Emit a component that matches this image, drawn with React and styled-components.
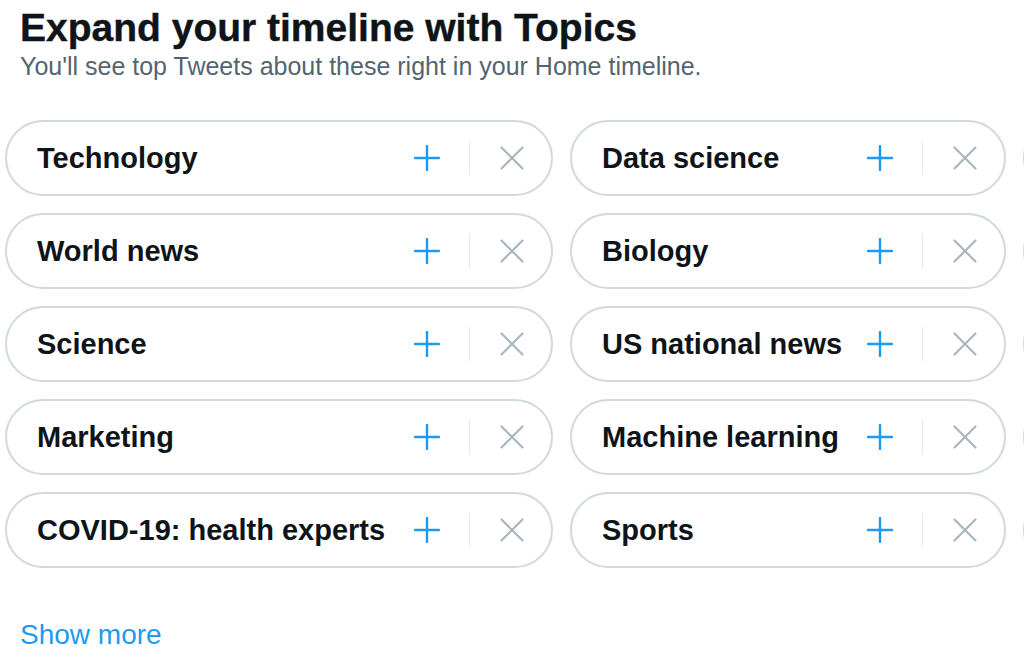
import React from "react";
import styled, { createGlobalStyle } from "styled-components";

const topics = [
  ["Technology", "Data science", "Psychology"],
  ["World news", "Biology", "Space"],
  ["Science", "US national news", "Business news"],
  ["Marketing", "Machine learning", "Gaming"],
  ["COVID-19: health experts", "Sports", "Entertainment"],
];

const columnWidths = ["548px", "436px", "436px"];

function PlusIcon() {
  return (
    <svg width="26" height="26" viewBox="0 0 26 26" fill="none">
      <path
        d="M13 1v24M1 13h24"
        stroke="#1d9bf0"
        strokeWidth="2.4"
        strokeLinecap="round"
      />
    </svg>
  );
}

function CloseIcon() {
  return (
    <svg width="24" height="24" viewBox="0 0 24 24" fill="none">
      <path
        d="M1.5 1.5l21 21M22.5 1.5l-21 21"
        stroke="#a9b6bf"
        strokeWidth="2.2"
        strokeLinecap="round"
      />
    </svg>
  );
}

function TopicPill({ name }) {
  return (
    <Pill>
      <PillLabel>{name}</PillLabel>
      <IconButton aria-label={`Follow ${name}`}>
        <PlusIcon />
      </IconButton>
      <Divider />
      <IconButton aria-label={`Dismiss ${name}`}>
        <CloseIcon />
      </IconButton>
    </Pill>
  );
}

export default function App() {
  const rows = topics.flat();
  return (
    <>
      <GlobalStyle />
      <Page>
        <Header>
          <Title>Expand your timeline with Topics</Title>
          <Subtitle>
            You'll see top Tweets about these right in your Home timeline.
          </Subtitle>
        </Header>
        <Scroller>
          <TopicGrid columns={columnWidths.join(" ")}>
            {rows.map((name) => (
              <TopicPill key={name} name={name} />
            ))}
          </TopicGrid>
        </Scroller>
        <ShowMore href="#">Show more</ShowMore>
      </Page>
    </>
  );
}

const GlobalStyle = createGlobalStyle`
  * {
    box-sizing: border-box;
  }
  html, body {
    margin: 0;
    padding: 0;
    background: #ffffff;
  }
  body {
    font-family: "Liberation Sans", Arial, sans-serif;
    color: #0f1419;
    overflow: hidden;
  }
`;

const Page = styled.div`
  width: 1024px;
  height: 655px;
  overflow: hidden;
  padding: 0 0 0 5px;
`;

const Header = styled.div`
  padding: 6px 0 0 15px;
`;

const Title = styled.h1`
  margin: 0;
  font-size: 39px;
  line-height: 44px;
  font-weight: 700;
  color: #0f1419;
  -webkit-text-stroke: 0.4px #0f1419;
`;

const Subtitle = styled.p`
  margin: 0;
  font-size: 25px;
  line-height: 32px;
  color: #536471;
`;

const Scroller = styled.div`
  margin-top: 38px;
  overflow: hidden;
`;

const TopicGrid = styled.div`
  display: grid;
  grid-template-columns: ${(props) => props.columns};
  grid-auto-flow: row;
  column-gap: 17px;
  row-gap: 17px;
  width: max-content;
`;

const Pill = styled.div`
  display: flex;
  align-items: center;
  height: 76px;
  border: 2px solid #cfd9de;
  border-radius: 38px;
  padding: 0 11px 0 30px;
  background: #ffffff;
`;

const PillLabel = styled.span`
  flex: 1;
  font-size: 29px;
  font-weight: 700;
  color: #0f1419;
  white-space: nowrap;
`;

const IconButton = styled.button`
  display: flex;
  align-items: center;
  justify-content: center;
  width: 56px;
  height: 56px;
  padding: 0;
  border: none;
  background: transparent;
  cursor: pointer;
`;

const Divider = styled.div`
  width: 1px;
  height: 34px;
  margin: 0 14px;
  background: #e4eaed;
`;

const ShowMore = styled.a`
  display: inline-block;
  margin: 50px 0 0 15px;
  font-size: 28px;
  line-height: 34px;
  color: #1d9bf0;
  text-decoration: none;
`;
